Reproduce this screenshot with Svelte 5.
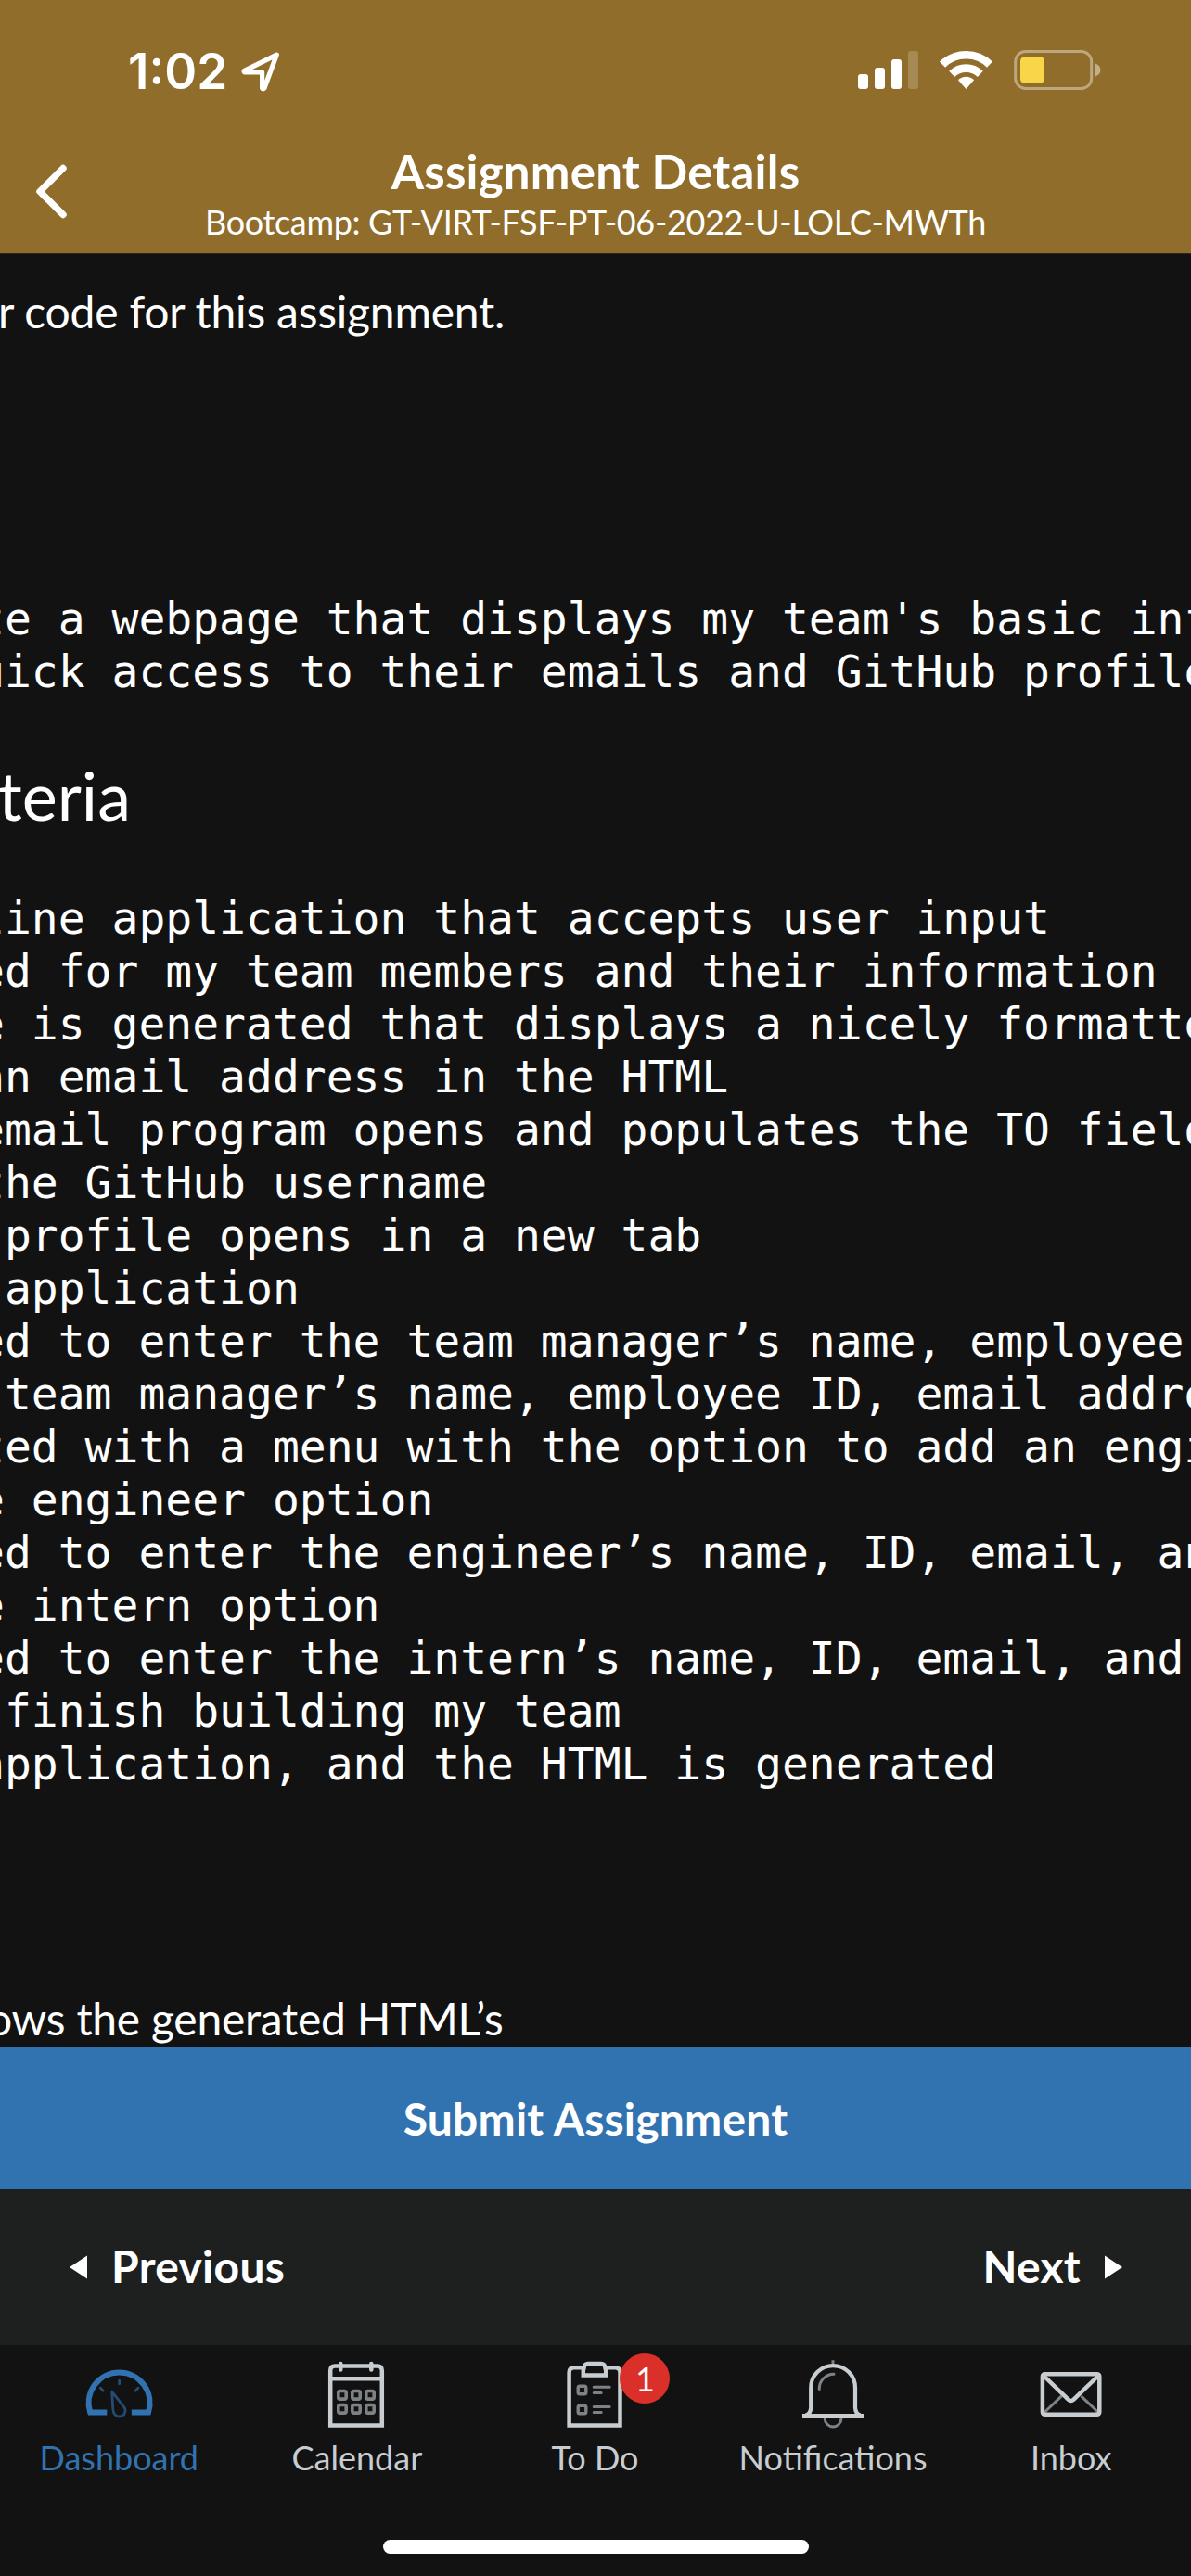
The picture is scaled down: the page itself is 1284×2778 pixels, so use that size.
<script>
  const story = `te a webpage that displays my team's basic info
uick access to their emails and GitHub profiles`;

  const criteria = `line application that accepts user input
ed for my team members and their information
e is generated that displays a nicely formatted
an email address in the HTML
email program opens and populates the TO field
the GitHub username
 profile opens in a new tab
 application
ed to enter the team manager’s name, employee ID
 team manager’s name, employee ID, email address
ted with a menu with the option to add an engineer
e engineer option
ed to enter the engineer’s name, ID, email, and
e intern option
ed to enter the intern’s name, ID, email, and school
 finish building my team
application, and the HTML is generated`;

  const tabs = [
    { id: 'dashboard', label: 'Dashboard', active: true },
    { id: 'calendar', label: 'Calendar' },
    { id: 'todo', label: 'To Do', badge: 1 },
    { id: 'bell', label: 'Notifications' },
    { id: 'inbox', label: 'Inbox' }
  ];
</script>

<div class="screen">
  <header>
    <div class="status">
      <div class="clock">
        <span class="time">1:02</span>
        <svg class="location" width="44" height="46" viewBox="0 0 44 46" fill="none" stroke="#fff" stroke-width="5.2" stroke-linejoin="round">
          <path d="M39.3 5.2 4.3 22.3Q3.6 24 5.4 24H23.6V41Q24.6 42.6 26 41Z" />
        </svg>
      </div>
      <svg class="indicators" width="264" height="46" viewBox="0 0 264 46">
        <g fill="#fff">
          <rect x="0" y="28" width="11" height="16" rx="3" />
          <rect x="18" y="21" width="11" height="23" rx="3" />
          <rect x="36" y="12" width="11" height="32" rx="3" />
          <rect x="54" y="3" width="11" height="41" rx="3" opacity=".2" />
        </g>
        <g fill="none" stroke="#fff" stroke-width="8.6">
          <path d="M91 17.6a36.5 36.5 0 0 1 51 0" />
          <path d="M101.2 27.8a22 22 0 0 1 30.6 0" />
        </g>
        <path d="M116.5 44 107.9 34.3a12 12 0 0 1 17.2 0Z" fill="#fff" />
        <rect x="169.7" y="3.5" width="82" height="40" rx="11" fill="none" stroke="#fff" stroke-opacity=".4" stroke-width="3" />
        <rect x="175" y="9" width="26" height="29" rx="5" fill="#f8d648" />
        <path d="M256 16.5q5.4 2 5.4 7t-5.4 7Z" fill="#fff" opacity=".45" />
      </svg>
    </div>
    <div class="titlebar">
      <svg class="back" width="40" height="64" viewBox="0 0 40 64" fill="none" stroke="#fff" stroke-width="7.4" stroke-linecap="round" stroke-linejoin="round">
        <path d="M33 7.5 8 32.5 33 57.5" />
      </svg>
      <div class="titles">
        <h1>Assignment Details</h1>
        <div class="course">Bootcamp: GT-VIRT-FSF-PT-06-2022-U-LOLC-MWTh</div>
      </div>
    </div>
  </header>

  <main>
    <p class="intro">r code for this assignment.</p>
    <pre class="story">{story}</pre>
    <h2>teria</h2>
    <pre>{criteria}</pre>
    <p class="mockup">ows the generated HTML’s</p>
  </main>

  <button class="submit">Submit Assignment</button>

  <div class="pager">
    <div class="step">
      <svg width="19" height="26" viewBox="0 0 19 26"><path d="M19 0.5V25.5L0 13Z" fill="#fff" /></svg>
      <span>Previous</span>
    </div>
    <div class="step">
      <span>Next</span>
      <svg width="19" height="26" viewBox="0 0 19 26"><path d="M0 0.5V25.5L19 13Z" fill="#fff" /></svg>
    </div>
  </div>

  <nav>
    <div class="tabs">
      {#each tabs as tab (tab.id)}
        <div class="tab" class:active={tab.active}>
          <div class="icon">
            <svg width="80" height="80" viewBox="0 0 80 80" fill="none" stroke="currentColor" stroke-width="4.5">
              {#if tab.id === 'dashboard'}
                <path d="M27.3 59.6H9.2A33 33 0 1 1 72 59.6H53.9" stroke-width="6" />
                <g class="faint" stroke-width="2.8" stroke-linecap="round">
                  <path d="M40.6 25.2v3.6M20.3 33.2l3 3M61 33.2l-3 3" />
                  <path d="M32.7 37.2 46.4 54.6Q48 59 45.5 62 40.6 66 36 62 34 60 33.8 56Z" stroke-linejoin="round" />
                </g>
              {:else if tab.id === 'calendar'}
                <path d="M11.2 73.5V14.5Q11.2 9.5 16.2 9.5H61.8Q66.8 9.5 66.8 14.5V73.5ZM11.2 23.3H66.8" />
                <path d="M22.3 7v6.4M55.3 7v6.4" stroke-linecap="round" />
                <g class="faint" stroke-width="3.6">
                  {#each [36.5, 51.5] as y}
                    {#each [19.8, 34.8, 49.8] as x}
                      <rect {x} {y} width="8.4" height="8.6" rx="1.8" />
                    {/each}
                  {/each}
                </g>
              {:else if tab.id === 'todo'}
                <path d="M26 11.2H18Q12.6 11.2 12.6 16.6V73.5H67.5V16.6Q67.5 11.2 62 11.2H54" />
                <path d="M27.8 19.5V11.5H28.5Q29 7 33 7H47Q51 7 51.5 11.5H52.2V19.5Z" />
                <g class="faint" stroke-width="3.4">
                  <rect x="22.2" y="31.2" width="8.6" height="8.6" rx="1.8" />
                  <rect x="22.2" y="52.2" width="8.6" height="8.6" rx="1.8" />
                  <path d="M39.2 32.3H56.2M39.2 38.5H47.2M39.2 53.5H56.2M39.2 59.4H47.2" stroke-width="3" stroke-linecap="round" />
                </g>
              {:else if tab.id === 'bell'}
                <path d="M7 63.6H73" stroke-width="5" />
                <path d="M10.5 62.5Q16.2 61 16.2 54V33a23.9 23.9 0 0 1 47.8 0V54Q64 61 69.7 62.5" stroke-width="4.2" />
                <g class="faint" stroke-width="3">
                  <path d="M40 3.2V7M31.2 66a8.9 8.9 0 1 0 17.8 0" />
                  <path d="M25.2 34.5A16 16 0 0 1 41 18.2" stroke-linecap="round" />
                </g>
              {:else}
                <path class="faint" d="M29.5 41.8 10.5 60M50.5 41.8 69.5 60" stroke-width="3" />
                <rect x="8.9" y="18.2" width="61.4" height="43.6" rx="2.6" />
                <path d="M9.5 19.5 36.7 45.6Q39.6 48.4 42.5 45.6L69.7 19.5" />
              {/if}
            </svg>
            {#if tab.badge}<span class="badge">{tab.badge}</span>{/if}
          </div>
          <span class="label">{tab.label}</span>
        </div>
      {/each}
    </div>
    <div class="home"></div>
  </nav>
</div>

<style>
  :global(body) {
    background: #121212;
  }
  .screen {
    display: flex;
    flex-direction: column;
    width: 1284px;
    height: 2778px;
    overflow: hidden;
    background: #121212;
    color: #fff;
    font-family: Lato, sans-serif;
  }
  h1, h2, p, pre {
    margin: 0;
  }
  header {
    box-sizing: border-box;
    height: 274px;
    flex: none;
    background: #906d2a;
    border-bottom: 1px solid #2c2820;
  }
  .status {
    display: flex;
    justify-content: space-between;
    padding: 52px 95px 0 138px;
    height: 102px;
    box-sizing: border-box;
  }
  .clock {
    display: flex;
    gap: 13px;
  }
  .time {
    width: 108px;
    font: 600 53px/50px Inter, sans-serif;
    white-space: nowrap;
  }
  .location {
    margin-top: 2px;
  }
  .titlebar {
    display: flex;
    padding: 53px 0 0 35px;
  }
  .back {
    margin-top: 19px;
    flex: none;
  }
  .titles {
    flex: 1;
    padding-right: 75px;
    text-align: center;
  }
  h1 {
    font-size: 51px;
    font-weight: 700;
    line-height: 60px;
    letter-spacing: .2px;
  }
  .course {
    font-size: 36px;
    line-height: 48px;
    letter-spacing: -.33px;
    white-space: nowrap;
  }
  main {
    flex: 1;
    min-height: 0;
    overflow: hidden;
    padding-top: 33px;
    font-size: 48px;
  }
  p {
    line-height: 58px;
    letter-spacing: -.22px;
    white-space: nowrap;
  }
  .intro {
    margin-left: -2px;
  }
  pre {
    margin-left: -24px;
    font: 48px/57px "DejaVu Sans Mono", monospace;
  }
  .story {
    margin-top: 274px;
  }
  h2 {
    margin: 61px 0 62px -2px;
    font-size: 72px;
    font-weight: 400;
    line-height: 86px;
  }
  .mockup {
    margin: 217px 0 0 -14px;
    letter-spacing: -.26px;
  }
  .submit {
    flex: none;
    height: 153px;
    padding: 0;
    border: 0;
    background: #3172b1;
    color: #fff;
    font: 700 48px/58px Lato, sans-serif;
    letter-spacing: .2px;
  }
  .pager {
    display: flex;
    justify-content: space-between;
    align-items: center;
    flex: none;
    box-sizing: border-box;
    height: 168px;
    padding: 0 74px 0 75px;
    background: #1e201f;
    font-size: 48px;
    font-weight: 700;
    line-height: 58px;
    letter-spacing: .3px;
  }
  .step {
    display: flex;
    align-items: center;
    gap: 26px;
  }
  .step span {
    margin-bottom: 2px;
  }
  nav {
    display: flex;
    flex-direction: column;
    align-items: center;
    flex: none;
    height: 249px;
  }
  .tabs {
    display: flex;
    align-self: stretch;
    padding: 13px 1px 0 0;
  }
  .tab {
    display: flex;
    flex: 1 1 0;
    flex-direction: column;
    align-items: center;
    gap: 6px;
    color: #c7cdd1;
  }
  .active {
    color: #3172b1;
  }
  .icon {
    position: relative;
    height: 80px;
  }
  .faint {
    opacity: .6;
  }
  .badge {
    position: absolute;
    left: 67px;
    top: -4px;
    width: 54px;
    height: 54px;
    border-radius: 50%;
    background: #db3029;
    color: #fff;
    font-size: 36px;
    line-height: 54px;
    text-align: center;
  }
  .label {
    font-size: 36px;
    line-height: 44px;
  }
  .home {
    width: 459px;
    height: 15px;
    margin-top: 67px;
    border-radius: 8px;
    background: #fff;
  }
</style>
